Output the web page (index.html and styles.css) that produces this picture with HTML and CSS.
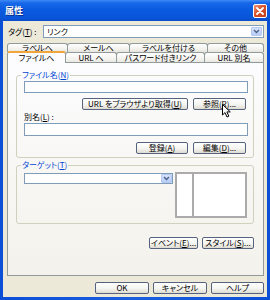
FILE: index.html
```html
<!DOCTYPE html>
<html lang="ja">
<head>
<meta charset="utf-8">
<link rel="stylesheet" href="styles.css">
</head>
<body>
<div class="window">
  <div class="titlebar">
    <span class="title">属性</span>
    <span class="close"><svg width="8" height="8" viewBox="0 0 8 8"><path d="M1 1L7 7M7 1L1 7" stroke="#fff" stroke-width="1.8" stroke-linecap="round"/></svg></span>
  </div>
  <div class="client">
    <div class="tagrow">
      <span class="taglbl">タグ(<u>T</u>) :</span>
      <div class="select grow">
        <span class="val">リンク</span>
        <span class="dd"><svg width="7" height="5" viewBox="0 0 7 5"><path d="M1 1L3.5 3.5L6 1" fill="none" stroke="#4D6185" stroke-width="1.4"/></svg></span>
      </div>
    </div>
    <div class="tabs">
      <div class="tabrow back">
        <div class="tab">ラベルへ</div>
        <div class="tab">メールへ</div>
        <div class="tab">ラベルを付ける</div>
        <div class="tab">その他</div>
      </div>
      <div class="tabrow front">
        <div class="tab sel">ファイルへ</div>
        <div class="tab">URL へ</div>
        <div class="tab">パスワード付きリンク</div>
        <div class="tab">URL 別名</div>
      </div>
    </div>
    <div class="panel">
      <fieldset class="group file">
        <legend>ファイル名(<u>N</u>)</legend>
        <div class="input"></div>
        <div class="btnrow">
          <button class="btn w-url">URL をブラウザより取得(<u>U</u>)</button>
          <button class="btn w-ref">参照(<u>R</u>)...</button>
        </div>
        <div class="fieldlbl">別名(<u>L</u>) :</div>
        <div class="input tall"></div>
        <div class="btnrow">
          <button class="btn w-reg">登録(<u>A</u>)</button>
          <button class="btn w-ref">編集(<u>D</u>)...</button>
        </div>
      </fieldset>
      <fieldset class="group target">
        <legend>ターゲット(<u>T</u>)</legend>
        <div class="targetrow">
          <div class="select tsel">
            <span class="val"></span>
            <span class="dd"><svg width="7" height="5" viewBox="0 0 7 5"><path d="M1 1L3.5 3.5L6 1" fill="none" stroke="#4D6185" stroke-width="1.4"/></svg></span>
          </div>
          <div class="preview">
            <div class="pleft"></div>
            <div class="pright"></div>
          </div>
        </div>
      </fieldset>
      <div class="actrow">
        <button class="btn w-ev">イベント(<u>E</u>)...</button>
        <button class="btn w-st">スタイル(<u>S</u>)...</button>
      </div>
    </div>
    <div class="dlgrow">
      <button class="btn w-ok">OK</button>
      <button class="btn w-ok">キャンセル</button>
      <button class="btn w-help">ヘルプ</button>
    </div>
  </div>
  <svg class="cursor" width="9" height="14" viewBox="0 0 9 14"><path d="M0.5 0.5L0.5 11L3 8.6L5 13L6.8 12.2L4.9 7.9L8.3 7.9Z" fill="#fff" stroke="#000" stroke-width="1"/></svg>
</div>
</body>
</html>
```
FILE: styles.css
```css
* { box-sizing: border-box; }
html, body { margin: 0; padding: 0; }
body {
  width: 270px;
  height: 300px;
  overflow: hidden;
  font-family: "Noto Sans CJK JP", "Noto Sans", sans-serif;
  font-size: 8px;
  line-height: 10px;
  color: #000;
  font-feature-settings: "palt";
  background: #fff;
}
u { text-decoration: underline; text-underline-offset: 1px; }

.window {
  position: relative;
  width: 270px;
  height: 300px;
  display: flex;
  flex-direction: column;
  background: linear-gradient(90deg, #0A4FD6, #1A5EE0 50%, #0A4FD6);
}
.titlebar {
  height: 21px;
  flex: none;
  display: flex;
  align-items: center;
  justify-content: space-between;
  padding: 0 3px 0 5px;
  background: linear-gradient(#3D8BF4 0%, #1868EA 14%, #0B5BE0 45%, #0856DA 80%, #0A4DCB 100%);
}
.title {
  color: #fff;
  font-weight: bold;
  font-size: 9px;
  text-shadow: 1px 1px 0 #0A2E8E;
}
.close {
  width: 14px;
  height: 14px;
  border: 1px solid #fff;
  border-radius: 2px;
  background: linear-gradient(135deg, #EF9A7E 0%, #D9502A 45%, #C2401A 100%);
  display: flex;
  align-items: center;
  justify-content: center;
}

.client {
  flex: 1;
  margin: 0 3px 3px 3px;
  background: #ECE9D8;
  display: flex;
  flex-direction: column;
  padding: 4px 3px 3px 4px;
}

.tagrow {
  height: 13px;
  display: flex;
  align-items: stretch;
}
.taglbl {
  width: 36px;
  flex: none;
  padding-left: 1px;
  display: flex;
  align-items: center;
}
.grow { flex: 1; }

.select {
  display: flex;
  align-items: stretch;
  border: 1px solid #7F9DB9;
  background: #fff;
}
.select .val {
  flex: 1;
  padding-left: 3px;
  display: flex;
  align-items: center;
}
.select .dd {
  width: 11px;
  margin: 1px;
  border-radius: 1px;
  background: linear-gradient(#D6E2FC, #B7CCF6);
  border: 1px solid #B5C8F2;
  display: flex;
  align-items: center;
  justify-content: center;
}

.tabs { margin-top: 5px; }
.tabrow { display: grid; }
.back { grid-template-columns: 61px 62px 78px 1fr; height: 9px; }
.front { grid-template-columns: 59px 51px 88px 1fr; height: 10px; }
.tab {
  border: 1px solid #919B9C;
  border-bottom: none;
  border-radius: 3px 3px 0 0;
  background: linear-gradient(#FFFFFF, #F3F2EE 60%, #E6E4DC);
  text-align: center;
  line-height: 8px;
  white-space: nowrap;
}
.tab + .tab { margin-left: -1px; }
.front .tab { line-height: 9px; }
.tab.sel {
  position: relative;
  z-index: 1;
  height: 12px;
  margin-top: -1px;
  border-top: 2px solid #F2A53A;
  background: #FCFCFE;
  line-height: 9px;
}

.panel {
  flex: 1;
  border: 1px solid #919B9C;
  background: linear-gradient(#FCFCFE, #F7F6F2 60%, #F3F2EC);
  padding: 7px 9px 0 8px;
}

.group {
  margin: 0;
  min-width: 0;
  border: 1px solid #D0D0BF;
  border-radius: 3px;
  padding: 1px 5px 3px 7px;
}
.group legend {
  padding: 0 1px;
  margin-left: -3px;
  color: #0046D5;
  line-height: 10px;
}
.target { margin-top: 2px; padding: 0 5px 5px 7px; }

.input {
  height: 12px;
  border: 1px solid #7F9DB9;
  background: #fff;
}
.input.tall { height: 13px; margin-top: 1px; }

.btnrow {
  display: flex;
  justify-content: flex-end;
  gap: 5px;
  margin-top: 5px;
  padding-right: 2px;
}
.btnrow + .fieldlbl { margin-top: 2px; }
.input.tall + .btnrow { margin-top: 6px; }

.btn {
  height: 12px;
  margin: 0;
  padding: 0;
  border: 1px solid #55637E;
  border-radius: 2px;
  background: linear-gradient(#FFFFFF, #F4F4F0 55%, #DEDBD1);
  font: inherit;
  font-feature-settings: "palt";
  line-height: 10px;
  color: #000;
  text-align: center;
  white-space: nowrap;
}
.w-url { width: 106px; }
.w-ref { width: 53px; }
.w-reg { width: 52px; }
.w-ev { width: 49px; }
.w-st { width: 52px; }
.w-ok { width: 54px; }
.w-help { width: 53px; }

.fieldlbl { height: 10px; }

.targetrow {
  display: flex;
  align-items: flex-start;
  gap: 2px;
  padding-top: 2px;
}
.tsel {
  width: 149px;
  height: 11px;
  margin-top: 1px;
}
.tsel .dd { margin: 0; }
.preview {
  width: 72px;
  height: 46px;
  border: 2px solid #ABABAB;
  background: #fff;
  display: flex;
}
.pleft {
  width: 17px;
  border-right: 2px solid #ABABAB;
}
.pright { flex: 1; }

.actrow {
  display: flex;
  justify-content: flex-end;
  gap: 4px;
  margin-top: 13px;
}

.dlgrow {
  display: flex;
  justify-content: flex-end;
  gap: 4px;
  margin-top: 6px;
  height: 12px;
}

.cursor {
  position: absolute;
  left: 222px;
  top: 104px;
}
```
